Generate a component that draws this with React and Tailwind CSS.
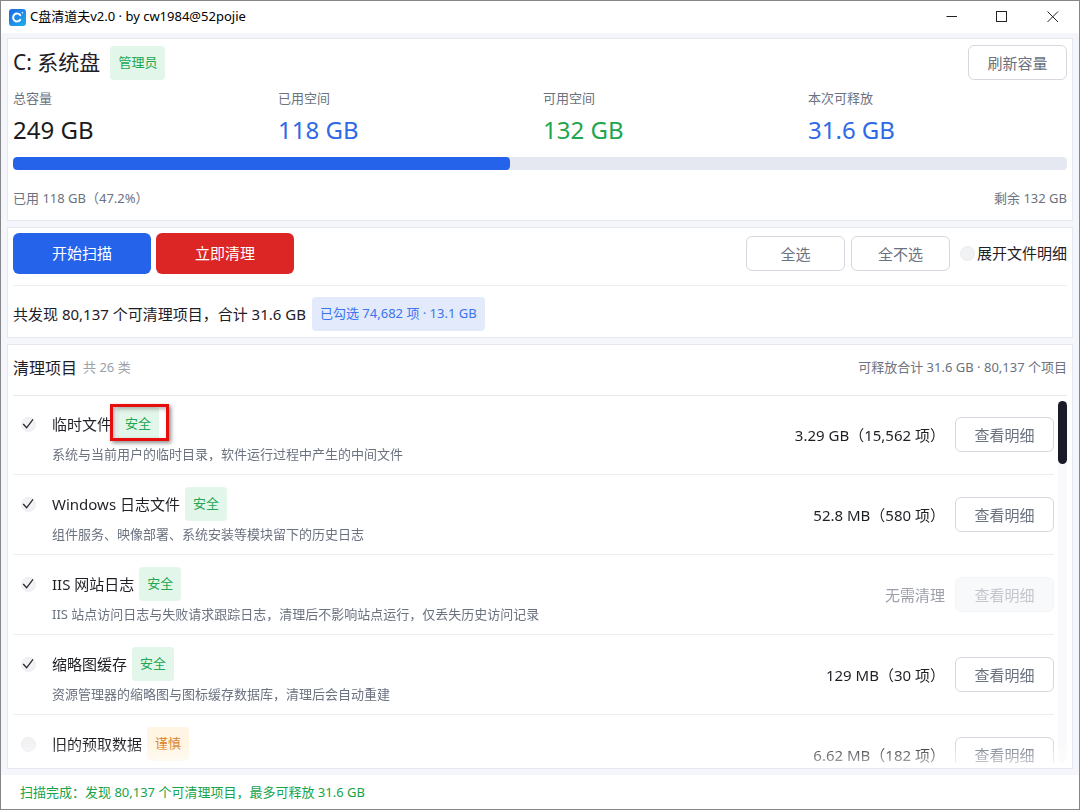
import { useState } from "react";

const CATEGORIES = [
    {
        id: "temp",
        name: "临时文件",
        level: "safe",
        description: "系统与当前用户的临时目录，软件运行过程中产生的中间文件",
        size: "3.29 GB（15,562 项）",
        checked: true,
        highlighted: true,
    },
    {
        id: "winlogs",
        name: "Windows 日志文件",
        level: "safe",
        description: "组件服务、映像部署、系统安装等模块留下的历史日志",
        size: "52.8 MB（580 项）",
        checked: true,
    },
    {
        id: "iis",
        name: "IIS 网站日志",
        level: "safe",
        description:
            "IIS 站点访问日志与失败请求跟踪日志，清理后不影响站点运行，仅丢失历史访问记录",
        size: null,
        checked: true,
    },
    {
        id: "thumbs",
        name: "缩略图缓存",
        level: "safe",
        description: "资源管理器的缩略图与图标缓存数据库，清理后会自动重建",
        size: "129 MB（30 项）",
        checked: true,
    },
    {
        id: "prefetch",
        name: "旧的预取数据",
        level: "caution",
        description: "",
        size: "6.62 MB（182 项）",
        checked: false,
    },
];

const STATS = [
    { label: "总容量", value: "249 GB", color: "text-[#1a1b20]" },
    { label: "已用空间", value: "118 GB", color: "text-[#2f6ae6]" },
    { label: "可用空间", value: "132 GB", color: "text-[#1fa64f]" },
    { label: "本次可释放", value: "31.6 GB", color: "text-[#2f6ae6]" },
];

const USED_PERCENT = 47.2;

const TONES = {
    green: "bg-[#e3f6ea] text-[#22a653]",
    blue: "bg-[#e2eafc] text-[#3b74ee]",
    amber: "bg-[#fff5e2] text-[#d9822b]",
};

const Badge = ({ tone, children }) => (
    <span
        className={`flex h-[34px] items-center rounded px-2 text-[13px] whitespace-nowrap ${TONES[tone]}`}
    >
        {children}
    </span>
);

const OutlineButton = ({ children, disabled, onClick }) => (
    <button
        type="button"
        disabled={disabled}
        onClick={onClick}
        className="h-[35px] w-[99px] shrink-0 rounded-md border border-[#d5d8df] bg-white text-[15px] leading-4 text-[#6b7280] disabled:border-[#f3f4f7] disabled:bg-[#f8f9fb] disabled:text-[#c3c6cd]"
    >
        {children}
    </button>
);

const RoundCheck = ({ id, checked, onChange }) => (
    <span className="relative flex size-[15px] shrink-0">
        <input
            id={id}
            type="checkbox"
            checked={checked}
            onChange={onChange}
            className="peer size-[15px] appearance-none rounded-full border border-[#ececef] bg-[#f1f2f4]"
        />
        <svg
            viewBox="0 0 15 15"
            className="pointer-events-none absolute inset-0 hidden size-[15px] peer-checked:block"
            fill="none"
            stroke="#26272c"
            strokeWidth="1.3"
        >
            <path d="M2.2 7 L5.6 10.8 L12 2.4" />
        </svg>
    </span>
);

const Card = ({ className = "", children }) => (
    <section
        className={`flex flex-col border border-[#e6e8f0] bg-white px-[5px] ${className}`}
    >
        {children}
    </section>
);

const TitleBar = () => (
    <header className="flex h-8 shrink-0 items-center bg-white pl-2">
        <svg viewBox="0 0 17 17" className="size-[17px]">
            <defs>
                <linearGradient id="logo" x1="0" y1="0" x2="1" y2="1">
                    <stop offset="0" stopColor="#1d66e6" />
                    <stop offset="1" stopColor="#1fb0ea" />
                </linearGradient>
            </defs>
            <rect width="17" height="17" rx="3" fill="url(#logo)" />
            <path
                d="M11.2 6.2 A3.9 3.9 0 1 0 11.2 10.8"
                fill="none"
                stroke="#fff"
                strokeWidth="2"
                strokeLinecap="round"
            />
            <circle cx="13.4" cy="3.8" r="0.8" fill="#fff" />
        </svg>
        <h1 className="ml-1 text-[13px] text-black">
            C盘清道夫v2.0 · by cw1984@52pojie
        </h1>
        <div className="ml-auto flex h-full">
            <button
                type="button"
                aria-label="最小化"
                className="flex w-[50px] items-center justify-center"
            >
                <svg viewBox="0 0 12 12" className="size-3" stroke="#222">
                    <path d="M0.5 5.5H11" />
                </svg>
            </button>
            <button
                type="button"
                aria-label="最大化"
                className="flex w-[50px] items-center justify-center"
            >
                <svg
                    viewBox="0 0 12 12"
                    className="size-3"
                    fill="none"
                    stroke="#222"
                >
                    <rect x="0.5" y="0.5" width="10" height="10" />
                </svg>
            </button>
            <button
                type="button"
                aria-label="关闭"
                className="flex w-[52px] items-center justify-center"
            >
                <svg viewBox="0 0 12 12" className="size-3" stroke="#222">
                    <path d="M0.5 0.5 L11 11 M11 0.5 L0.5 11" />
                </svg>
            </button>
        </div>
    </header>
);

const DiskCard = () => (
    <Card className="pt-1.5 pb-3">
        <div className="flex h-[35px] items-center">
            <h2 className="text-[21px]">C: 系统盘</h2>
            <div className="ml-2.5">
                <Badge tone="green">管理员</Badge>
            </div>
            <div className="ml-auto">
                <OutlineButton>刷新容量</OutlineButton>
            </div>
        </div>
        <dl className="mt-2 grid grid-cols-4 gap-1.5">
            {STATS.map((stat) => (
                <div key={stat.label}>
                    <dt className="text-[13px] leading-5 text-[#6b7280]">
                        {stat.label}
                    </dt>
                    <dd className={`mt-1.5 text-[24px] leading-8 ${stat.color}`}>
                        {stat.value}
                    </dd>
                </div>
            ))}
        </dl>
        <div className="mt-[11px] h-[13px] overflow-hidden rounded-[4px] bg-[#e6e8f1]">
            <div
                className="h-full rounded-[4px] bg-[#2563eb]"
                style={{ width: `${USED_PERCENT}%` }}
            />
        </div>
        <div className="mt-[18px] flex justify-between text-[13px] leading-5 text-[#6b7280]">
            <span>已用 118 GB（{USED_PERCENT}%）</span>
            <span>剩余 132 GB</span>
        </div>
    </Card>
);

const ActionsCard = ({ onSelectAll, onSelectNone, expanded, onExpand }) => (
    <Card className="pt-[5px] pb-1.5">
        <div className="flex items-center gap-[5px]">
            <button
                type="button"
                className="h-[41px] w-[138px] rounded-md bg-[#2563eb] text-[15px] text-white"
            >
                开始扫描
            </button>
            <button
                type="button"
                className="h-[41px] w-[138px] rounded-md bg-[#dc2626] text-[15px] text-white"
            >
                立即清理
            </button>
            <div className="ml-auto flex items-center gap-1.5">
                <OutlineButton onClick={onSelectAll}>全选</OutlineButton>
                <OutlineButton onClick={onSelectNone}>全不选</OutlineButton>
                <div className="ml-1 flex items-center gap-0.5">
                    <RoundCheck
                        id="expand"
                        checked={expanded}
                        onChange={onExpand}
                    />
                    <label htmlFor="expand" className="text-[15px]">
                        展开文件明细
                    </label>
                </div>
            </div>
        </div>
        <hr className="mt-[11px] border-[#eceef2]" />
        <div className="mt-[11px] flex items-center gap-1.5">
            <p className="text-[15px]">
                共发现 80,137 个可清理项目，合计 31.6 GB
            </p>
            <Badge tone="blue">已勾选 74,682 项 · 13.1 GB</Badge>
        </div>
    </Card>
);

const CategoryRow = ({ category, checked, onToggle }) => (
    <li className="flex shrink-0 flex-col gap-1.5">
        <div className="flex items-center">
            <div className="flex min-w-0 flex-1 flex-col gap-1 pt-1.5 pb-1">
                <div className="flex h-[34px] items-center pl-2">
                    <RoundCheck
                        id={category.id}
                        checked={checked}
                        onChange={onToggle}
                    />
                    <label htmlFor={category.id} className="ml-4 text-[15px]">
                        {category.name}
                    </label>
                    <div className="relative ml-[5px]">
                        <Badge
                            tone={category.level === "safe" ? "green" : "amber"}
                        >
                            {category.level === "safe" ? "安全" : "谨慎"}
                        </Badge>
                        {category.highlighted && (
                            <div className="absolute -top-[3px] -right-2.5 bottom-0 -left-[7px] border-[3px] border-[#e60d0d] shadow-[2px_2px_4px_rgba(0,0,0,0.45),inset_2px_2px_4px_rgba(0,0,0,0.3)]" />
                        )}
                    </div>
                </div>
                <p className="h-[19px] truncate pl-[39px] text-[13px] leading-[19px] text-[#6b7280]">
                    {category.description}
                </p>
            </div>
            <span
                className={`mr-2.5 text-[15px] leading-4 ${category.size ? "" : "text-[#9ca0ab]"}`}
            >
                {category.size ?? "无需清理"}
            </span>
            <OutlineButton disabled={!category.size}>查看明细</OutlineButton>
        </div>
        <hr className="border-[#eceef2]" />
    </li>
);

const App = () => {
    const [selected, setSelected] = useState(
        CATEGORIES.filter((c) => c.checked).map((c) => c.id)
    );
    const [expanded, setExpanded] = useState(false);

    const toggle = (id) =>
        setSelected((ids) =>
            ids.includes(id) ? ids.filter((i) => i !== id) : [...ids, id]
        );

    return (
        <div className="flex h-screen flex-col border border-[#85868a] bg-[#f4f6fb] font-['Noto_Sans','Noto_Sans_CJK_SC',sans-serif] text-[#1f2025]">
            <TitleBar />
            <main className="flex min-h-0 flex-1 flex-col gap-1.5 px-1.5 pt-[5px] pb-1.5">
                <DiskCard />
                <ActionsCard
                    onSelectAll={() => setSelected(CATEGORIES.map((c) => c.id))}
                    onSelectNone={() => setSelected([])}
                    expanded={expanded}
                    onExpand={() => setExpanded(!expanded)}
                />
                <Card className="min-h-0 flex-1 pb-[5px]">
                    <div className="flex h-[50px] shrink-0 items-center pb-1">
                        <h2 className="text-[16px]">清理项目</h2>
                        <span className="ml-1.5 text-[13px] text-[#9ca0a8]">
                            共 26 类
                        </span>
                        <span className="ml-auto text-[13px] text-[#6b7280]">
                            可释放合计 31.6 GB · 80,137 个项目
                        </span>
                    </div>
                    <hr className="border-[#e6e8ec]" />
                    {/* La liste s'estompe vers le bas */}
                    <div className="mt-[5px] flex min-h-0 flex-1 gap-1 [mask-image:linear-gradient(to_bottom,black_calc(100%-20px),rgba(0,0,0,0.4))]">
                        <ul className="flex min-w-0 flex-1 flex-col gap-1.5 overflow-y-auto [scrollbar-width:none]">
                            {CATEGORIES.map((category) => (
                                <CategoryRow
                                    key={category.id}
                                    category={category}
                                    checked={selected.includes(category.id)}
                                    onToggle={() => toggle(category.id)}
                                />
                            ))}
                        </ul>
                        <div className="w-[9px] shrink-0 rounded-full bg-[#f9f9fb]">
                            <div className="h-[63px] rounded-full bg-[#1a1a28]" />
                        </div>
                    </div>
                </Card>
            </main>
            <footer className="flex h-[34px] shrink-0 items-center bg-white pt-0.5 pl-[19px] text-[13px] text-[#16a34a]">
                扫描完成：发现 80,137 个可清理项目，最多可释放 31.6 GB
            </footer>
        </div>
    );
};

export default App;
